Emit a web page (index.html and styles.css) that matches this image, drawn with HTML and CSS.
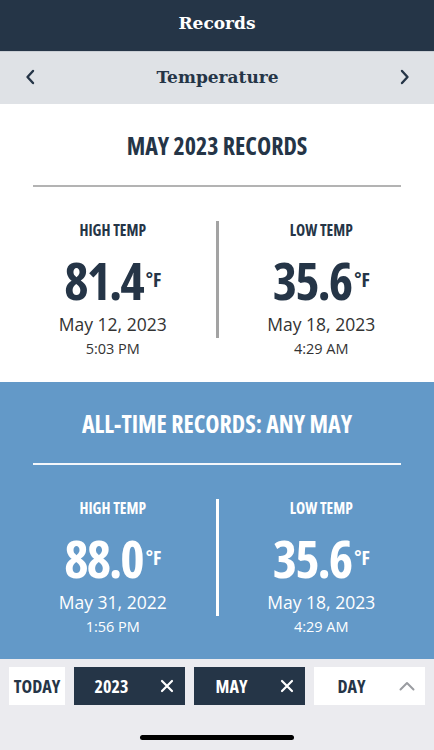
FILE: index.html
```html
<!DOCTYPE html>
<html lang="en">
  <head>
    <meta charset="UTF-8" />
    <meta name="viewport" content="width=device-width, initial-scale=1.0" />
    <title>Records</title>
    <link rel="stylesheet" href="styles.css">
  </head>
  <body>
    <div class="screen">
      <header class="topbar">Records</header>

      <nav class="subnav">
        <button class="arrow" aria-label="Previous">
          <svg width="10" height="16" viewBox="0 0 10 16"><path d="M8 2 L2.5 8 L8 14" fill="none" stroke="#253547" stroke-width="2.4" stroke-linecap="round" stroke-linejoin="round"/></svg>
        </button>
        <span class="subnav-title">Temperature</span>
        <button class="arrow" aria-label="Next">
          <svg width="10" height="16" viewBox="0 0 10 16"><path d="M2 2 L7.5 8 L2 14" fill="none" stroke="#253547" stroke-width="2.4" stroke-linecap="round" stroke-linejoin="round"/></svg>
        </button>
      </nav>

      <!-- this month -->
      <section class="records">
        <h1 class="records-title">MAY 2023 RECORDS</h1>
        <div class="rule"></div>
        <div class="stats">
          <div class="stat">
            <div class="stat-label">HIGH TEMP</div>
            <div class="stat-value">81.4<span class="unit">°F</span></div>
            <div class="stat-date">May 12, 2023</div>
            <div class="stat-time">5:03 PM</div>
          </div>
          <div class="divider"></div>
          <div class="stat">
            <div class="stat-label">LOW TEMP</div>
            <div class="stat-value">35.6<span class="unit">°F</span></div>
            <div class="stat-date">May 18, 2023</div>
            <div class="stat-time">4:29 AM</div>
          </div>
        </div>
      </section>

      <!-- all time -->
      <section class="records records--alltime">
        <h1 class="records-title">ALL-TIME RECORDS: ANY MAY</h1>
        <div class="rule"></div>
        <div class="stats">
          <div class="stat">
            <div class="stat-label">HIGH TEMP</div>
            <div class="stat-value">88.0<span class="unit">°F</span></div>
            <div class="stat-date">May 31, 2022</div>
            <div class="stat-time">1:56 PM</div>
          </div>
          <div class="divider"></div>
          <div class="stat">
            <div class="stat-label">LOW TEMP</div>
            <div class="stat-value">35.6<span class="unit">°F</span></div>
            <div class="stat-date">May 18, 2023</div>
            <div class="stat-time">4:29 AM</div>
          </div>
        </div>
      </section>

      <footer class="filters">
        <div class="filter-bar">
          <button class="chip chip--today">TODAY</button>
          <button class="chip chip--dark">
            <span class="chip-text">2023</span>
            <span class="chip-icon">
              <svg width="14" height="14" viewBox="0 0 14 14"><path d="M2 2 L12 12 M12 2 L2 12" stroke="#fff" stroke-width="2.2" stroke-linecap="round"/></svg>
            </span>
          </button>
          <button class="chip chip--dark">
            <span class="chip-text">MAY</span>
            <span class="chip-icon">
              <svg width="14" height="14" viewBox="0 0 14 14"><path d="M2 2 L12 12 M12 2 L2 12" stroke="#fff" stroke-width="2.2" stroke-linecap="round"/></svg>
            </span>
          </button>
          <button class="chip chip--light">
            <span class="chip-text">DAY</span>
            <span class="chip-icon">
              <svg width="16" height="10" viewBox="0 0 16 10"><path d="M1.5 8.5 L8 2 L14.5 8.5" fill="none" stroke="#9a9ca1" stroke-width="2" stroke-linecap="round" stroke-linejoin="round"/></svg>
            </span>
          </button>
        </div>
        <div class="home-indicator"></div>
      </footer>
    </div>
  </body>
</html>
```

FILE: styles.css
```css
:root {
  --navy: #253547;
  --blue: #6399c8;
  --light-gray: #dfe2e6;
  --footer-bg: #ebebef;
  --text-gray: #333;
}

* {
  box-sizing: border-box;
}

body {
  margin: 0;
  background: var(--footer-bg);
}

button {
  border: 0;
  padding: 0;
  background: none;
  cursor: pointer;
}

/* condensed bold headings: Open Sans at 75% width */
.records-title,
.stat-label,
.stat-value,
.chip {
  font-family: "Open Sans", sans-serif;
  font-stretch: 75%;
  font-weight: bold;
}

.screen {
  width: 434px;
  height: 750px;
  display: flex;
  flex-direction: column;
  overflow: hidden;
}

/* top bars */
.topbar {
  height: 51px;
  display: flex;
  align-items: center;
  justify-content: center;
  background: var(--navy);
  color: white;
  font-family: "DejaVu Serif", serif;
  font-weight: bold;
  font-size: 17px;
  padding-bottom: 6px;
}

.subnav {
  height: 53px;
  display: flex;
  align-items: center;
  justify-content: space-between;
  padding: 0 24px 2px 25px;
  background: var(--light-gray);
  border-top: 1px solid #c9ced4;
}

.subnav-title {
  font-family: "DejaVu Serif", serif;
  font-weight: bold;
  font-size: 17px;
  color: var(--navy);
}

.arrow {
  display: flex;
  align-items: center;
}

/* record panels */
.records {
  height: 278px;
  padding: 27px 10px 0;
  background: white;
  color: var(--navy);
  text-align: center;
}

.records--alltime {
  height: 277px;
  background: var(--blue);
  color: white;
}

.records-title {
  margin: 0;
  font-size: 24px;
  line-height: 30px;
}

.rule {
  height: 2px;
  margin: 24px 23px 0;
  background: #b3b3b3;
}

.records--alltime .rule {
  background: #f4f7fb;
}

.stats {
  display: grid;
  grid-template-columns: 1fr 3px 1fr;
  margin-top: 34px;
}

.divider {
  height: 117px;
  background: #a3a3a3;
}

.records--alltime .divider {
  background: white;
}

.stat-label {
  font-size: 15.5px;
  line-height: 18px;
}

.stat-value {
  margin-top: 12px;
  display: flex;
  justify-content: center;
  align-items: flex-start;
  font-size: 52px;
  line-height: 58px;
  letter-spacing: -2px;
}

.unit {
  font-size: 20px;
  line-height: 20px;
  margin-top: 19px;
  margin-left: 3px;
  letter-spacing: 0;
}

.stat-date {
  margin-top: 5px;
  font-family: "Open Sans", sans-serif;
  font-size: 17.5px;
  line-height: 20px;
  color: var(--text-gray);
}

.stat-time {
  margin-top: 7px;
  font-family: "Open Sans", sans-serif;
  font-size: 14.5px;
  line-height: 16px;
  color: var(--text-gray);
}

.records--alltime .stat-date,
.records--alltime .stat-time {
  color: white;
}

/* filter footer */
.filters {
  flex: 1;
  background: var(--footer-bg);
  padding: 8px 9px 0;
}

.filter-bar {
  display: flex;
  gap: 9px;
}

.chip {
  height: 38px;
  flex: 1;
  display: flex;
  align-items: center;
  font-size: 18px;
}

.chip--today {
  flex: 0 0 56px;
  justify-content: center;
  background: white;
  color: var(--navy);
}

.chip--dark {
  background: var(--navy);
  color: white;
}

.chip--light {
  background: white;
  color: var(--navy);
}

.chip-text {
  flex: 1;
  text-align: center;
}

.chip-icon {
  width: 36px;
  display: flex;
  justify-content: center;
  align-items: center;
}

.home-indicator {
  width: 154px;
  height: 5px;
  margin: 30px auto 0;
  border-radius: 3px;
  background: black;
}
```
